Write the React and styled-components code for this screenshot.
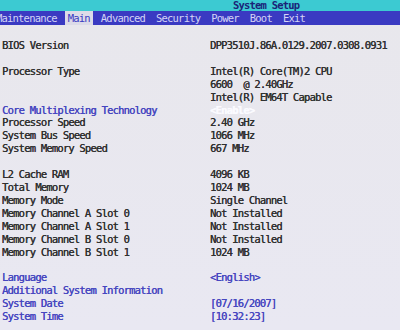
import React from 'react';
import styled, { createGlobalStyle } from 'styled-components';

const GlobalStyle = createGlobalStyle`
  html, body {
    margin: 0;
    padding: 0;
    background: #e7e6ee;
  }
  body {
    font-family: "DejaVu Sans Mono", "Liberation Mono", monospace;
    font-size: 10.5px;
    letter-spacing: -0.8px;
  }
`;

const Screen = styled.div`
  width: 400px;
  height: 330px;
  overflow: hidden;
  display: flex;
  flex-direction: column;
  background: linear-gradient(180deg, #e8e7ec 0%, #e9e8f2 100%);
`;

const TitleBar = styled.div`
  height: 11px;
  background: #3ccad2;
  display: flex;
  align-items: center;
  padding-left: 233px;
`;

const Title = styled.span`
  color: #1a2478;
  font-weight: bold;
  line-height: 11px;
`;

const MenuBar = styled.div`
  height: 14px;
  background: #3a3ac2;
  display: flex;
  align-items: center;
  margin-left: -9.5px;
`;

const MenuItem = styled.span`
  padding: 0 5.5px;
  line-height: 14px;
  white-space: pre;
  color: ${({ active }) => (active ? '#3a3ac2' : '#d4d4f6')};
  background: ${({ active }) => (active ? '#dcdbe8' : 'transparent')};
  ${({ active }) => active && 'padding: 0 3px; margin: 0 2.5px; height: 14px;'}
`;

const Body = styled.div`
  padding: 14px 0 0 2px;
  display: grid;
  grid-template-columns: 208px 1fr;
  grid-auto-rows: 12.92px;
  line-height: 12.92px;
  text-shadow: 0.3px 0 0 currentColor;
`;

const Label = styled.div`
  grid-column: 1;
  white-space: pre;
  color: ${({ blue }) => (blue ? '#4646c0' : '#303030')};
`;

const Value = styled.div`
  grid-column: 2;
  white-space: pre;
  color: ${({ tone }) =>
    tone === 'blue' ? '#4646c0' : tone === 'white' ? '#fbfbff' : '#303030'};
  ${({ tone }) => tone === 'white' && 'font-weight: bold;'}
`;

const menu = ['Maintenance', 'Main', 'Advanced', 'Security', 'Power', 'Boot', 'Exit'];

// each row: [label, value, labelBlue, valueTone]
const rows = [
  ['BIOS Version', 'DPP3510J.86A.0129.2007.0308.0931'],
  ['', ''],
  ['Processor Type', 'Intel(R) Core(TM)2 CPU'],
  ['', '6600  @ 2.40GHz'],
  ['', 'Intel(R) EM64T Capable'],
  ['Core Multiplexing Technology', '<Enable>', true, 'white'],
  ['Processor Speed', '2.40 GHz'],
  ['System Bus Speed', '1066 MHz'],
  ['System Memory Speed', '667 MHz'],
  ['', ''],
  ['L2 Cache RAM', '4096 KB'],
  ['Total Memory', '1024 MB'],
  ['Memory Mode', 'Single Channel'],
  ['Memory Channel A Slot 0', 'Not Installed'],
  ['Memory Channel A Slot 1', 'Not Installed'],
  ['Memory Channel B Slot 0', 'Not Installed'],
  ['Memory Channel B Slot 1', '1024 MB'],
  ['', ''],
  ['Language', '<English>', true, 'blue'],
  ['Additional System Information', '', true],
  ['System Date', '[07/16/2007]', true, 'blue'],
  ['System Time', '[10:32:23]', true, 'blue'],
];

const App = () => {
  return (
    <>
      <GlobalStyle />
      <Screen>
        <TitleBar>
          <Title>System Setup</Title>
        </TitleBar>
        <MenuBar>
          {menu.map((item) => (
            <MenuItem key={item} active={item === 'Main'}>
              {item}
            </MenuItem>
          ))}
        </MenuBar>
        <Body>
          {rows.map(([label, value, blue, tone], i) => (
            <React.Fragment key={i}>
              <Label blue={blue}>{label}</Label>
              <Value tone={tone}>{value}</Value>
            </React.Fragment>
          ))}
        </Body>
      </Screen>
    </>
  );
};

export default App;
